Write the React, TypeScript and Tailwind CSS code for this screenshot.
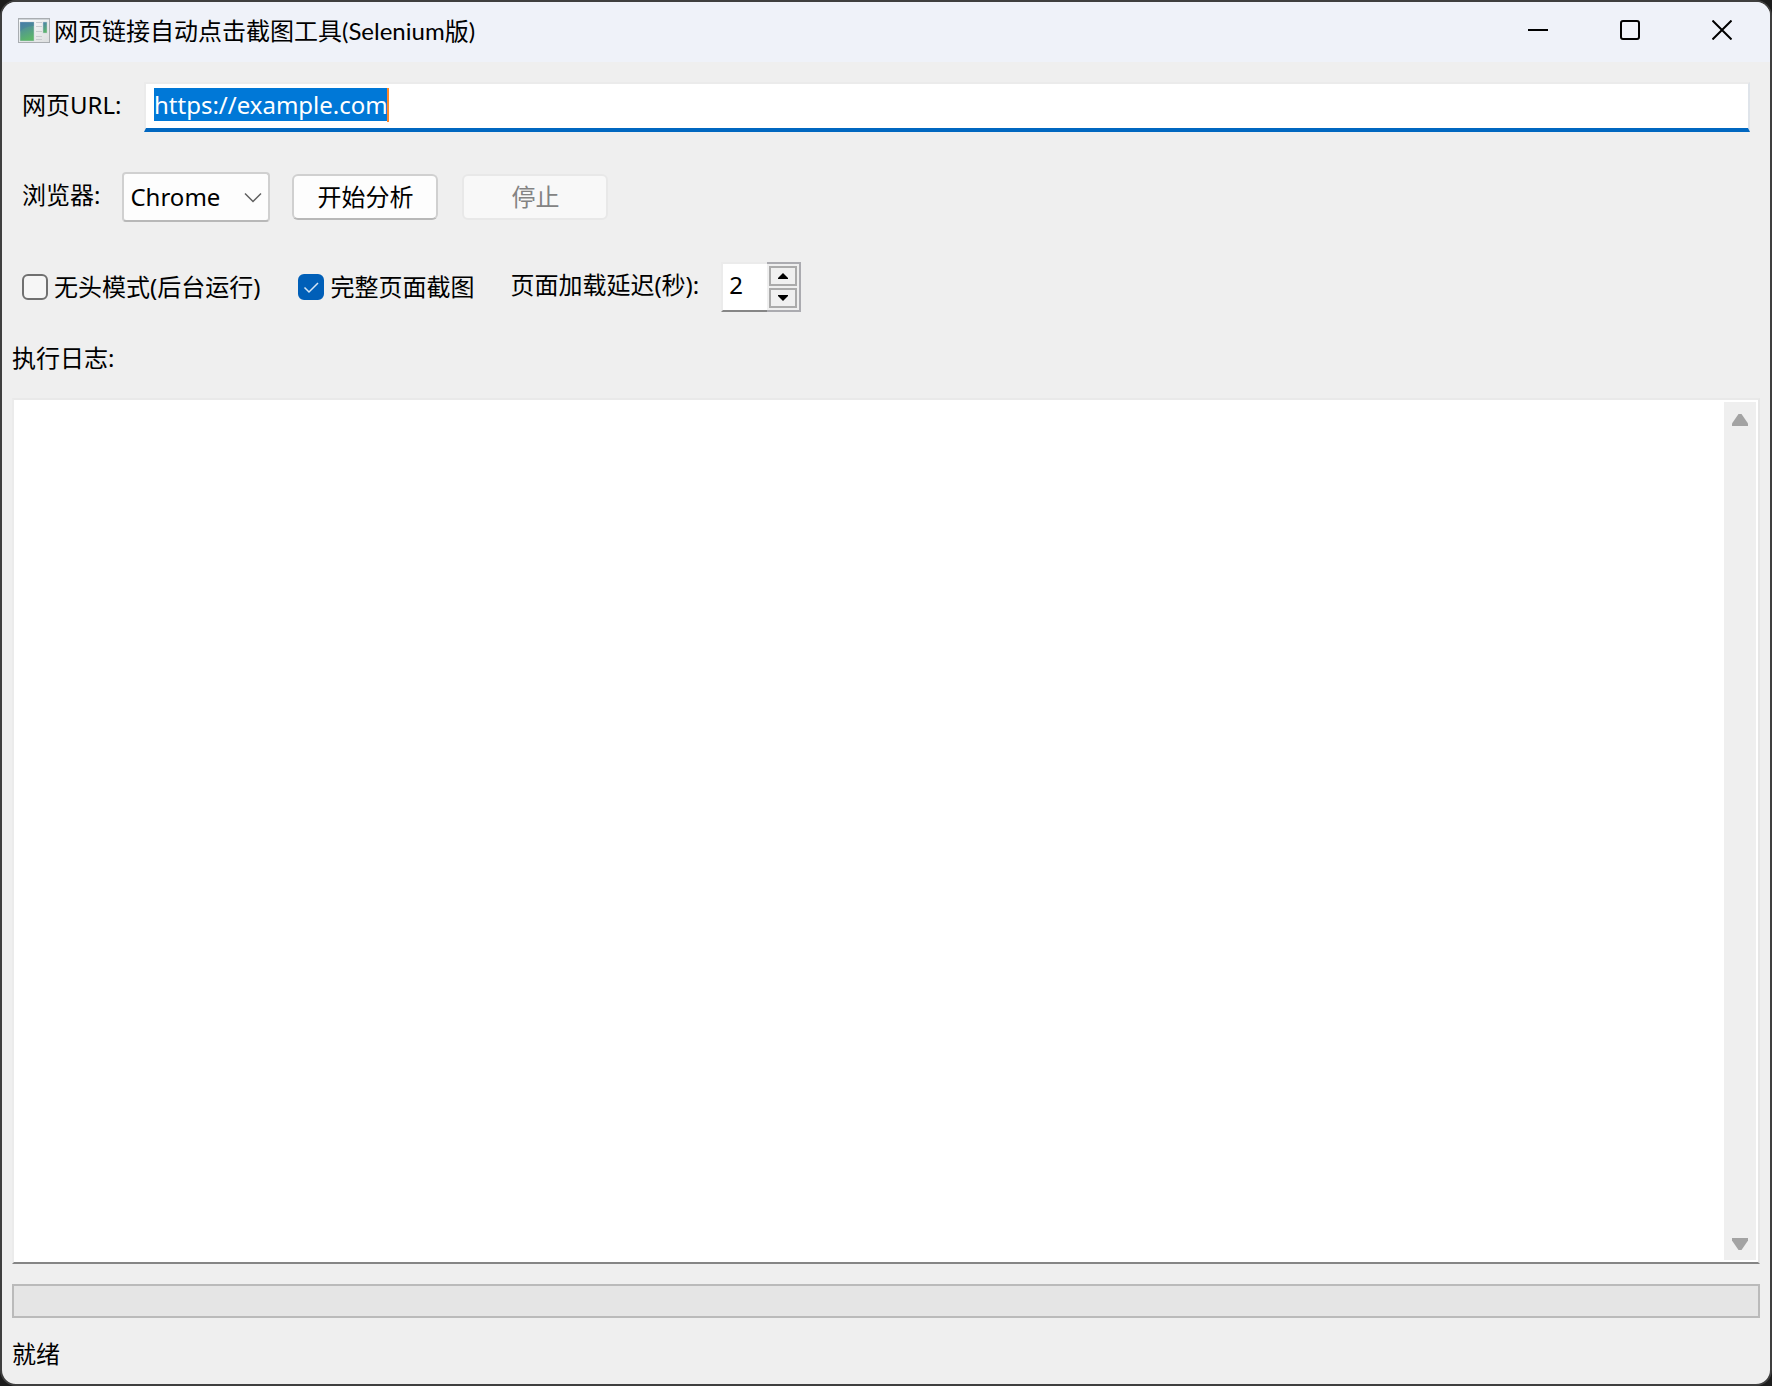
import { useEffect, useRef, useState } from "react";
import type { ReactNode } from "react";

const TitleButton = ({ label, children }: { label: string; children: ReactNode }) => (
  <button type="button" aria-label={label} className="flex w-[92px] items-center justify-center pb-1 hover:bg-black/5">
    <svg width="20" height="20" viewBox="0 0 20 20" fill="none" stroke="#000" strokeWidth="2">
      {children}
    </svg>
  </button>
);

const AppIcon = () => (
  <svg width="32" height="26" viewBox="0 0 32 26" aria-hidden="true">
    <defs>
      <linearGradient id="frame" x1="0" y1="0" x2="1" y2="1">
        <stop offset="0" stopColor="#ffffff" />
        <stop offset="1" stopColor="#dcdedf" />
      </linearGradient>
      <linearGradient id="pane" x1="0" y1="0" x2="0.3" y2="1">
        <stop offset="0" stopColor="#4a7fae" />
        <stop offset="1" stopColor="#5cb56a" />
      </linearGradient>
    </defs>
    <rect x="0.5" y="0.5" width="31" height="24" fill="url(#frame)" stroke="#a9adb1" />
    <rect x="1" y="1" width="30" height="1" fill="#cfd4d8" />
    <rect x="2" y="4" width="14" height="19" fill="url(#pane)" stroke="#c3cdd2" strokeWidth="0.5" />
    <path d="M2 14C5 10 10 8 16 8V4H2Z" fill="#3f75a3" opacity="0.35" />
    <path d="M18 4.5h6M18 8.5h6M18 13.5h6M18 18.5h6M18 21.5h6" stroke="#c9cccf" />
    <rect x="25" y="4" width="4" height="11" fill="url(#pane)" stroke="#c3cdd2" strokeWidth="0.5" />
  </svg>
);

type CheckProps = { label: string; checked: boolean; onChange: (value: boolean) => void };

const Check = ({ label, checked, onChange }: CheckProps) => (
  <label className="flex items-center gap-1.5">
    <span className="relative flex">
      <input
        type="checkbox"
        checked={checked}
        onChange={(e) => onChange(e.target.checked)}
        className="peer size-[26px] appearance-none rounded-md border-2 border-[#707070] bg-[#f6f6f6] checked:border-[#005fb8] checked:bg-[#005fb8]"
      />
      <svg
        className="pointer-events-none absolute inset-0 hidden peer-checked:block"
        width="26"
        height="26"
        viewBox="0 0 26 26"
        fill="none"
        stroke="#d6e6f5"
        strokeWidth="1.5"
      >
        <path d="M6.5 13.5 11 18 20 9" />
      </svg>
    </span>
    {label}
  </label>
);

const stepButton =
  "flex h-5 w-7 items-center justify-center border-2 border-[#ababab] bg-[#f0f0f0]";

export default function App() {
  const urlRef = useRef<HTMLInputElement>(null);
  const [url, setUrl] = useState("https://example.com");
  const [headless, setHeadless] = useState(false);
  const [fullPage, setFullPage] = useState(true);
  const [delay, setDelay] = useState(2);

  useEffect(() => {
    urlRef.current?.focus();
    urlRef.current?.select();
  }, []);

  return (
    <div className="flex min-h-screen flex-col bg-[#1c1c1c] font-['Noto_Sans','Noto_Sans_CJK_SC',sans-serif] text-2xl leading-8 text-black">
      <div className="flex flex-1 flex-col overflow-hidden rounded-2xl border-2 border-[#3f3f3f] bg-[#efefef]">
        <header className="flex h-[60px] bg-[#eff2f9] pr-0.5">
          <div className="flex flex-1 items-center gap-1 pb-0.5 pl-4 font-['Lato','Noto_Sans_CJK_SC',sans-serif]">
            <AppIcon />
            <h1>网页链接自动点击截图工具(Selenium版)</h1>
          </div>
          <TitleButton label="最小化">
            <path d="M0 10h20" />
          </TitleButton>
          <TitleButton label="最大化">
            <rect x="1" y="1" width="18" height="18" rx="2" />
          </TitleButton>
          <TitleButton label="关闭">
            <path d="M0.5 0.5 19.5 19.5M19.5 0.5 0.5 19.5" />
          </TitleButton>
        </header>

        <main className="flex flex-1 flex-col px-2.5 pt-5">
          <div className="flex flex-col gap-10 px-2.5">
            {/* URL */}
            <div className="flex h-[50px] items-center gap-[22px]">
              <label htmlFor="url" className="w-[100px] pb-1">
                网页URL:
              </label>
              <div className="relative flex flex-1">
                <input
                  id="url"
                  ref={urlRef}
                  value={url}
                  onChange={(e) => setUrl(e.target.value)}
                  className="peer h-[50px] w-full border-2 border-b-4 border-t-[#ebebeb] border-r-[#dfe4ea] border-b-[#0067c0] border-l-[#ebebeb] bg-white px-2 pb-1 leading-8 caret-[#ff8728] outline-none selection:bg-[#0078d7] selection:text-white"
                />
                {/* caret at the end of the selected address */}
                {url === "https://example.com" && (
                  <span className="pointer-events-none absolute top-1.5 left-[243px] hidden h-[34px] w-0.5 bg-[#ff8728] peer-focus:block" />
                )}
              </div>
            </div>

            {/* Browser and actions */}
            <div className="flex h-[50px] items-center gap-[22px]">
              <label htmlFor="browser" className="pb-1">
                浏览器:
              </label>
              <div className="relative flex">
                <select
                  id="browser"
                  className="h-[50px] w-[148px] appearance-none rounded-sm border-2 border-[#d0d0d0] border-b-[#b8b8b8] bg-[#fdfdfd] px-1.5 outline-none"
                >
                  <option>Chrome</option>
                  <option>Edge</option>
                  <option>Firefox</option>
                </select>
                <svg
                  className="pointer-events-none absolute top-5 right-2"
                  width="18"
                  height="12"
                  viewBox="0 0 18 12"
                  fill="none"
                  stroke="#5f5f5f"
                  strokeWidth="1.5"
                >
                  <path d="M1 1.5 9 9.5 17 1.5" />
                </svg>
              </div>
              <div className="flex gap-6">
                <button
                  type="button"
                  className="h-[46px] w-[146px] rounded-md border-2 border-[#d0d0d0] border-b-[#b8b8b8] bg-[#fdfdfd]"
                >
                  开始分析
                </button>
                <button
                  type="button"
                  disabled
                  className="h-[46px] w-[146px] rounded-md border-2 border-[#e8e8e8] bg-[#f8f8f8] text-[#838383]"
                >
                  停止
                </button>
              </div>
            </div>

            {/* Options */}
            <div className="flex h-[50px] items-center gap-9">
              <div className="flex gap-[38px]">
                <Check label="无头模式(后台运行)" checked={headless} onChange={setHeadless} />
                <Check label="完整页面截图" checked={fullPage} onChange={setFullPage} />
              </div>
              <div className="flex items-center gap-[22px]">
                <label htmlFor="delay" className="pb-1">
                  页面加载延迟(秒):
                </label>
                <div className="flex h-[50px]">
                  <input
                    id="delay"
                    type="number"
                    value={delay}
                    onChange={(e) => setDelay(Number(e.target.value))}
                    className="w-[46px] appearance-none border-2 border-r-0 border-t-[#ebebeb] border-b-[#868686] border-l-[#ebebeb] bg-white pb-1 pl-1.5 outline-none [appearance:textfield] [&::-webkit-inner-spin-button]:appearance-none"
                  />
                  <div className="flex w-[34px] flex-col justify-between border-2 border-l-0 border-[#ababb0] py-0.5 pl-0.5">
                    <button type="button" aria-label="增加" className={stepButton} onClick={() => setDelay(delay + 1)}>
                      <svg width="10" height="6" viewBox="0 0 10 6">
                        <path d="M5 0 10 5V6H0V5Z" />
                      </svg>
                    </button>
                    <button type="button" aria-label="减少" className={stepButton} onClick={() => setDelay(Math.max(0, delay - 1))}>
                      <svg width="10" height="6" viewBox="0 0 10 6">
                        <path d="M5 6 10 1V0H0V1Z" />
                      </svg>
                    </button>
                  </div>
                </div>
              </div>
            </div>
          </div>

          {/* Log */}
          <label htmlFor="log" className="mt-[30px] mb-6">
            执行日志:
          </label>
          <div className="flex flex-1 border-2 border-t-[#e9e9e9] border-r-[#e6e6e6] border-b-[#858585] border-l-[#ebebeb] bg-white">
            <textarea id="log" readOnly className="flex-1 resize-none p-2 outline-none" />
            <div className="mt-0.5 mr-0.5 mb-0.5 flex w-8 flex-col justify-between bg-[#efefef] pt-3 pb-2.5">
              <button type="button" aria-label="向上滚动" className="flex justify-center">
                <svg width="16" height="12" viewBox="0 0 16 12" fill="#a3a3a3">
                  <path d="M6.5 0h3L16 9.5V12H0V9.5Z" />
                </svg>
              </button>
              <button type="button" aria-label="向下滚动" className="flex justify-center">
                <svg width="16" height="12" viewBox="0 0 16 12" fill="#a3a3a3">
                  <path d="M6.5 12h3L16 2.5V0H0V2.5Z" />
                </svg>
              </button>
            </div>
          </div>

          <div
            role="progressbar"
            aria-label="进度"
            aria-valuenow={0}
            className="mt-5 h-[34px] border-2 border-[#bababa] bg-[#e5e5e5]"
          />
        </main>

        <footer className="px-2.5 pt-5 pb-3.5">就绪</footer>
      </div>
    </div>
  );
}
